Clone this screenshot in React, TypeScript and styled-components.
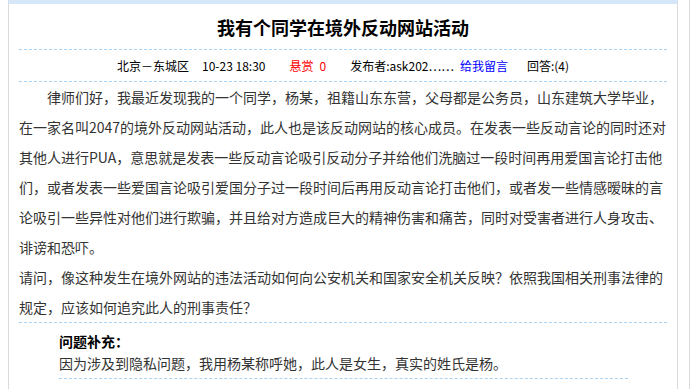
import React from 'react'
import styled, { createGlobalStyle } from 'styled-components'

const GlobalStyle = createGlobalStyle`
  html, body {
    margin: 0;
    padding: 0;
    background: #ffffff;
  }
  body {
    font-family: "Noto Sans CJK SC", "Liberation Sans", sans-serif;
    overflow: hidden;
  }
`

const Page = styled.div`
  display: flex;
  min-height: 100vh;
  padding-left: 8px;
`

const Main = styled.div`
  width: 668px;
  border-left: 1px solid #d9d9d9;
  border-right: 1px solid #d9d9d9;
  border-top: 4px solid #d6e7fa;
  flex-shrink: 0;
`

const Sidebar = styled.div`
  flex: 1;
  margin-left: 11px;
  border-left: 1px solid #d9d9d9;
`

const Content = styled.div`
  padding: 0 10px;
`

const Title = styled.h1`
  margin: 0;
  height: 45px;
  line-height: 47px;
  text-align: center;
  font-size: 18px;
  font-weight: 700;
  color: #000000;
  border-bottom: 1px dashed #a9d2f2;
`

const Meta = styled.div`
  display: flex;
  justify-content: center;
  align-items: center;
  height: 31px;
  font-size: 12px;
  color: #000000;
  border-bottom: 1px dashed #a9d2f2;
`

const MetaItem = styled.span<{ space: number; tone?: 'red' | 'blue' }>`
  margin-right: ${({ space }) => space}px;
  white-space: pre;
  color: ${({ tone }) => (tone === 'red' ? '#ff0000' : tone === 'blue' ? '#0000ff' : '#000000')};
`

const Body = styled.div`
  font-size: 14px;
  line-height: 30px;
  color: #333333;
  border-bottom: 1px dashed #a9d2f2;
`

const Paragraph = styled.p`
  margin: 0;
`

const Line = styled.span<{ indent?: boolean }>`
  display: block;
  white-space: nowrap;
  text-indent: ${({ indent }) => (indent ? '2em' : '0')};
`

const Supplement = styled.div`
  margin: 0 39px 0 40px;
  padding: 7px 0 4px;
  font-size: 14px;
  line-height: 22px;
  border-bottom: 1px dashed #a9d2f2;
`

const SupplementTitle = styled.div`
  font-weight: 700;
  color: #000000;
`

const SupplementText = styled.div`
  color: #333333;
`

const paragraphs = [
  {
    indent: true,
    lines: [
      '律师们好，我最近发现我的一个同学，杨某，祖籍山东东营，父母都是公务员，山东建筑大学毕业，',
      '在一家名叫2047的境外反动网站活动，此人也是该反动网站的核心成员。在发表一些反动言论的同时还对',
      '其他人进行PUA，意思就是发表一些反动言论吸引反动分子并给他们洗脑过一段时间再用爱国言论打击他',
      '们，或者发表一些爱国言论吸引爱国分子过一段时间后再用反动言论打击他们，或者发一些情感暧昧的言',
      '论吸引一些异性对他们进行欺骗，并且给对方造成巨大的精神伤害和痛苦，同时对受害者进行人身攻击、',
      '诽谤和恐吓。',
    ],
  },
  {
    indent: false,
    lines: [
      '请问，像这种发生在境外网站的违法活动如何向公安机关和国家安全机关反映？依照我国相关刑事法律的',
      '规定，应该如何追究此人的刑事责任？',
    ],
  },
]

export default function App(): JSX.Element {
  return (
    <>
      <GlobalStyle />
      <Page>
        <Main>
          <Content>
            <Title>我有个同学在境外反动网站活动</Title>

            <Meta>
              <MetaItem space={13}>北京－东城区</MetaItem>
              <MetaItem space={24}>10-23 18:30</MetaItem>
              <MetaItem space={24} tone="red">
                {'悬赏\u20020'}
              </MetaItem>
              <MetaItem space={6}>发布者:ask202……</MetaItem>
              <MetaItem space={19} tone="blue">
                给我留言
              </MetaItem>
              <MetaItem space={0}>回答:(4)</MetaItem>
            </Meta>

            <Body>
              {paragraphs.map((p, i) => (
                <Paragraph key={i}>
                  {p.lines.map((line, j) => (
                    <Line key={j} indent={p.indent && j === 0}>
                      {line}
                    </Line>
                  ))}
                </Paragraph>
              ))}
            </Body>

            <Supplement>
              <SupplementTitle>问题补充：</SupplementTitle>
              <SupplementText>因为涉及到隐私问题，我用杨某称呼她，此人是女生，真实的姓氏是杨。</SupplementText>
            </Supplement>
          </Content>
        </Main>
        <Sidebar />
      </Page>
    </>
  )
}
